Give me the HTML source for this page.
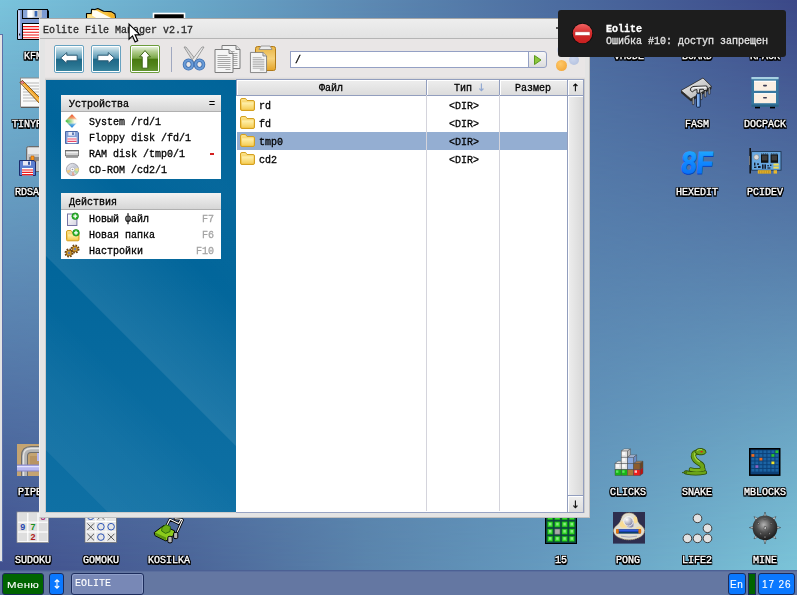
<!DOCTYPE html>
<html><head><meta charset="utf-8"><title>Eolite</title>
<style>
*{box-sizing:border-box;margin:0;padding:0}
html,body{width:797px;height:595px;overflow:hidden}
body{position:relative;font-family:"Liberation Mono","DejaVu Sans Mono",monospace;font-size:10px;line-height:10px;color:#000;background:#5a80b0}
div,span,svg{position:absolute}
svg{overflow:visible}
#wp1,#wp2{left:0;top:0;width:797px;height:595px}
#wp1{background:linear-gradient(to right,#7ac4dc 0%,#69a8c9 24%,#5c88b2 47%,#4c6ca0 70%,#3c4888 100%)}
#wp2{background:linear-gradient(to right,#3e4a8a 0%,#4a6296 24%,#5a84ac 46%,#669cc0 68%,#7ecadc 100%);-webkit-mask-image:linear-gradient(to bottom,transparent 0%,#000 100%);mask-image:linear-gradient(to bottom,transparent 0%,#000 100%)}
#lstrip{left:-10px;top:34px;width:13px;height:528px;background:#e4e4e4;border:1px solid #5c70a8}
.dl{will-change:transform;width:80px;margin-left:-40px;text-align:center;color:#fff;font-size:10px;line-height:10px;white-space:nowrap;-webkit-text-stroke:0.35px #fff;text-shadow:1px 0 #000,-1px 0 #000,0 1px #000,0 -1px #000,1px 1px #000,-1px -1px #000,1px -1px #000,-1px 1px #000,0 2px #000,1px 2px #000,-1px 2px #000}
.di{width:32px;height:32px}
.t{white-space:nowrap;color:#000;letter-spacing:0;will-change:transform;-webkit-text-stroke-width:0.3px}
.ar{font-family:"DejaVu Sans","Liberation Sans",sans-serif;font-size:10px;line-height:10px}
/* window */
#win{left:39px;top:18px;width:551px;height:500px;background:#e4e4e4;border:1px solid #c0c0c0;border-top-color:#a8a8a8;border-left-color:#f0f0f0}
#title{left:40px;top:19px;width:549px;height:20px;background:linear-gradient(#eeeeee,#e2e2e2);border-bottom:1px solid #b4b4b4}
#tbar{left:45px;top:39px;width:540px;height:41px;background:#e9e6e6}
.btn{width:30px;height:28px;border:1px solid #68a2c0;background:#fff;padding:0;border-radius:2px}
.btn i{position:absolute;left:1px;top:1px;right:1px;bottom:1px;display:block;background:linear-gradient(#dcebf1 0%,#9cc4d4 20%,#5a98b4 46%,#1e6888 52%,#27728f 75%,#38849f 100%)}
.btn.g{border-color:#6c9c3c}
.btn.g i{background:linear-gradient(#e6f1d8 0%,#b0cc8c 20%,#7ca848 46%,#497a10 52%,#51841a 75%,#649632 100%)}
#panel{left:46px;top:80px;width:190px;height:432px;background:linear-gradient(#00649a 0%,#02669b 45%,#0f70a4 100%)}
.box{left:61px;width:160px;background:#fff}
.box .h{left:0;top:0;width:160px;height:17px;background:linear-gradient(#f2f2f2,#d6d6d6);border-bottom:1px solid #b0b0b0}
#list{left:236px;top:80px;width:348px;height:433px;background:#fff;border-bottom:1px solid #98a4c4}
.hd{top:79px;height:17px;background:linear-gradient(#eeeeee,#dcdcdc);border:1px solid #929ebe;box-shadow:inset 1px 1px 0 #fff;text-align:center}
.vl{top:95px;width:1px;height:416px;background:#d4d4dc}
.ic16{width:16px;height:16px}
/* taskbar */
#task{left:0;top:570px;width:797px;height:25px;background:#6477a2;border-top:1px solid #4c6094;box-shadow:inset 0 1px 0 #5a6e9e}
.tb{top:573px;height:22px;border:1px solid #1c2c5c;border-radius:3px;color:#fff;font-family:"Liberation Sans","DejaVu Sans",sans-serif}
</style></head><body>
<div id="wp1"></div><div id="wp2"></div>
<div id="lstrip"></div>
<div id="desk" style="left:0;top:0;width:797px;height:595px">
<!-- KFM floppy -->
<svg style="left:17px;top:9px" width="32" height="31" viewBox="0 0 32 31">
<path d="M1.5 0.5 H30 L31.5 2 V30.5 H0.5 V1.5 Z" fill="#7c9ad2" stroke="#000" stroke-width="1"/>
<rect x="1" y="1.5" width="2.2" height="28.5" fill="#c6d2f6"/>
<rect x="5.5" y="0.5" width="25" height="9" fill="#7c9ad2" stroke="#000"/>
<rect x="5.9" y="1" width="4.3" height="8" fill="#88a4d8"/>
<rect x="10.5" y="1" width="14" height="7.5" fill="#e4e4e4"/><rect x="10.5" y="1" width="5" height="7.5" fill="#fff"/><rect x="21" y="1" width="3.5" height="7.5" fill="#c4c4c4"/>
<rect x="17.6" y="2" width="2.8" height="5.6" fill="#3464b4"/>
<rect x="5.5" y="14.5" width="25" height="16" fill="#fff" stroke="#000"/>
<path d="M6 17.6h24M6 20.4h24M6 23.2h24M6 26h24M6 28.8h24" stroke="#f01414" stroke-width="1.1"/>
<rect x="2" y="24.5" width="1.2" height="2" fill="#222"/>
</svg>
<span class="dl" style="left:33px;top:52px">KFM</span>
<!-- EOLITE (partly hidden) -->
<svg style="left:85px;top:8px" width="32" height="32" viewBox="0 0 32 32">
<path d="M1.5 12 L1.5 5.5 L6.2 5.5 L6.6 1.2 L10 1.6 L12.8 0.5 L18.6 3.2 L26.2 3.6 L30 6 L30.6 12 L30.6 28 L1.5 28 Z" fill="#f6c444" stroke="#000" stroke-width="1.1" stroke-linejoin="round"/>
<path d="M7.2 2.2 L11.4 2.6 L27 10.4 L7 10.4 Z" fill="#fffef4"/>
<path d="M2.4 6.6 L5.4 6.4 L12 10.4 L2.4 10.4 Z" fill="#fbe08a"/>
<path d="M22 5.2 L27 5.4 L29.6 8 L29.8 10.4 L27 10.4 Z" fill="#f4b428"/>
</svg>
<span class="dl" style="left:101px;top:52px">EOLITE</span>
<!-- SHELL (partly hidden) -->
<svg style="left:153px;top:13px" width="32" height="26" viewBox="0 0 32 26">
<rect x="0.5" y="0.5" width="31" height="24" fill="#000" stroke="#fff" stroke-width="1.6"/>
</svg>
<span class="dl" style="left:169px;top:52px">SHELL</span>
<!-- TINYPAD -->
<svg style="left:17px;top:77px" width="32" height="32" viewBox="0 0 32 32">
<rect x="3.5" y="1" width="24" height="29" fill="#fafafa" stroke="#8c8c8c" stroke-width="1"/>
<path d="M4 30.5h24" stroke="#5a5a5a"/>
<path d="M6 6h19M6 9h19M6 12h19M6 15h19M6 18h19M6 21h19M6 24h19" stroke="#b8b8b8" stroke-width="1"/>
<path d="M3 5.5 L5.5 3.5 L26 24 L27 28 L23 27 Z" fill="#f4a428" stroke="#6a4410" stroke-width="0.8"/>
<path d="M3 5.5 L5.5 3.5 L7.5 5.5 L5 7.6 Z" fill="#e87a8a" stroke="#6a4410" stroke-width="0.6"/>
<path d="M5 6.5 L24.5 26" stroke="#fcd88a" stroke-width="1"/>
</svg>
<span class="dl" style="left:33px;top:120px">TINYPAD</span>
<!-- RDSAVE -->
<svg style="left:17px;top:145px" width="32" height="32" viewBox="0 0 32 32">
<rect x="9.5" y="1.5" width="22" height="25" rx="2" fill="#c4c4c4" stroke="#6c6c6c"/>
<rect x="11" y="3" width="20" height="6" fill="#e8e8e8"/>
<rect x="12" y="12" width="19" height="4" fill="#8a8a8a"/>
<path d="M14 11 h3 v5 h2.2 l-3.7 4 l-3.7 -4 h2.2 Z" fill="#ff9a1c" stroke="#b45a08" stroke-width="0.6"/>
<path d="M2.5 15.5 H17 L18.5 17 V30.5 H2.5 Z" fill="#5c7ed0" stroke="#1c2c6c" stroke-width="1"/>
<rect x="6" y="16" width="8" height="4.5" fill="#e8e8f4"/><rect x="11" y="16.6" width="2" height="3.2" fill="#3454a4"/>
<rect x="5" y="23" width="11" height="7.5" fill="#fff"/>
<path d="M5 25h11M5 27.4h11M5 29.6h11" stroke="#f01c1c" stroke-width="1.2"/>
</svg>
<span class="dl" style="left:33px;top:188px">RDSAVE</span>
<!-- PIPES -->
<svg style="left:17px;top:444px" width="32" height="32" viewBox="0 0 32 32">
<rect x="0" y="0" width="32" height="32" fill="#c4a472"/>
<path d="M7.5 32 V12 Q7.5 5.5 14 5.5 H32" fill="none" stroke="#6e6e6e" stroke-width="7"/>
<path d="M7.5 32 V12 Q7.5 5.5 14 5.5 H32" fill="none" stroke="#b4b4b4" stroke-width="5"/>
<path d="M6.5 32 V12 Q6.5 4.5 14 4.5 H32" fill="none" stroke="#e4e4e4" stroke-width="1.4"/>
<rect x="13" y="12" width="19" height="9" fill="#b89462"/>
<path d="M0 24 H32" stroke="#8484c8" stroke-width="7"/>
<path d="M0 24 H32" stroke="#b8b8f0" stroke-width="5"/>
<path d="M0 22.6 H32" stroke="#e4e4ff" stroke-width="1.2"/>
<path d="M22 9 V17" stroke="#b8b8f0" stroke-width="4"/>
</svg>
<span class="dl" style="left:33px;top:488px">PIPES</span>
<!-- SUDOKU -->
<svg style="left:17px;top:512px" width="32" height="31" viewBox="0 0 32 31">
<rect x="0" y="0" width="31.5" height="30.5" fill="#fff" stroke="#909090" stroke-width="0.8"/>
<g fill="#dedede"><rect x="1.2" y="1" width="9" height="8.6"/><rect x="11.4" y="1" width="9" height="8.6"/><rect x="21.6" y="1" width="9" height="8.6"/><rect x="1.2" y="10.8" width="9" height="8.6"/><rect x="11.4" y="10.8" width="9" height="8.6"/><rect x="21.6" y="10.8" width="9" height="8.6"/><rect x="1.2" y="20.6" width="9" height="8.6"/><rect x="11.4" y="20.6" width="9" height="8.6"/><rect x="21.6" y="20.6" width="9" height="8.6"/></g>
<g font-family="Liberation Sans,DejaVu Sans,sans-serif" font-size="9" font-weight="bold" text-anchor="middle"><text x="5.7" y="18.4" fill="#2848b0">9</text><text x="15.9" y="18.4" fill="#18901c">7</text><text x="15.9" y="28.2" fill="#b01818">2</text><text x="26" y="8" fill="#b03880">8</text></g>
</svg>
<span class="dl" style="left:33px;top:556px">SUDOKU</span>
<!-- GOMOKU -->
<svg style="left:85px;top:512px" width="32" height="31" viewBox="0 0 32 31">
<rect x="0" y="0" width="31.5" height="30.5" fill="#fff" stroke="#707070" stroke-width="0.8"/>
<g fill="#e6e6e6"><rect x="1" y="0" width="9.4" height="9"/><rect x="11.2" y="0" width="9.4" height="9"/><rect x="21.4" y="0" width="9.4" height="9"/><rect x="1" y="10" width="9.4" height="9.4"/><rect x="11.2" y="10" width="9.4" height="9.4"/><rect x="21.4" y="10" width="9.4" height="9.4"/><rect x="1" y="20.4" width="9.4" height="9.4"/><rect x="11.2" y="20.4" width="9.4" height="9.4"/><rect x="21.4" y="20.4" width="9.4" height="9.4"/></g>
<g stroke="#4a4a4a" stroke-width="0.9" fill="none"><path d="M2.4 11.4l6.6 6.6M9 11.4l-6.6 6.6M2.4 21.8l6.6 6.6M9 21.8l-6.6 6.6M22.8 21.8l6.6 6.6M29.4 21.8l-6.6 6.6M12.6 1l6.6 6.6M19.2 1l-6.6 6.6"/></g>
<g stroke="#2c54b8" stroke-width="1" fill="none"><circle cx="15.9" cy="14.7" r="3.3"/><circle cx="26.1" cy="14.7" r="3.3"/><circle cx="15.9" cy="25.1" r="3.3"/><circle cx="5.7" cy="4.3" r="3.3"/></g>
</svg>
<span class="dl" style="left:101px;top:556px">GOMOKU</span>
<!-- KOSILKA -->
<svg style="left:153px;top:512px" width="32" height="32" viewBox="0 0 32 32">
<g fill="none" stroke="#000" stroke-width="2.6" stroke-linejoin="round" stroke-linecap="round"><path d="M14.2 12.7 L16.9 7.3 L25.7 11.5 L28.1 7.3 L29.6 7.9 L24.5 19.4"/><path d="M25.7 11.5 L28.1 7.3 L22 6.8"/></g>
<g fill="none" stroke="#fff" stroke-width="1.1" stroke-linejoin="round" stroke-linecap="round"><path d="M14.2 12.7 L16.9 7.3 L25.7 11.5 L28.1 7.3 L29.6 7.9 L24.5 19.4"/><path d="M28.1 7.3 L22 6.8"/></g>
<path d="M1.2 20.6 L10.6 13.6 L21.5 18.8 L21 23 L13 29 L2 23.6 Z" fill="#8ccc1c" stroke="#000" stroke-width="1"/>
<path d="M2 23 L13 28.4 L13 25.4 L2 20.6 Z" fill="#5c9410"/>
<path d="M9 15.5 L13 12.6 L17.5 14.6 L17 19.6 L12.6 21.4 L8.6 19 Z" fill="#6cae14" stroke="#1c5a08" stroke-width="0.8"/>
<rect x="14.8" y="24.4" width="4.4" height="6.4" rx="1.4" fill="#b4b4b4" stroke="#000" stroke-width="1"/>
<rect x="20.6" y="20.4" width="4.2" height="6.2" rx="1.4" fill="#b4b4b4" stroke="#000" stroke-width="1"/>
</svg>
<span class="dl" style="left:169px;top:556px">KOSILKA</span>
<!-- 15 -->
<svg style="left:545px;top:512px" width="32" height="32" viewBox="0 0 32 32">
<rect x="0.5" y="0.5" width="31" height="31" fill="#0c4444" stroke="#000"/>
<g fill="#34dc2c" stroke="#148c14" stroke-width="0.6"><rect x="2.6" y="2.6" width="5.2" height="5.2"/><rect x="9.8" y="2.6" width="5.2" height="5.2"/><rect x="17" y="2.6" width="5.2" height="5.2"/><rect x="24.2" y="2.6" width="5.2" height="5.2"/><rect x="2.6" y="9.8" width="5.2" height="5.2"/><rect x="9.8" y="9.8" width="5.2" height="5.2"/><rect x="17" y="9.8" width="5.2" height="5.2"/><rect x="24.2" y="9.8" width="5.2" height="5.2"/><rect x="2.6" y="17" width="5.2" height="5.2"/><rect x="17" y="17" width="5.2" height="5.2"/><rect x="24.2" y="17" width="5.2" height="5.2"/><rect x="2.6" y="24.2" width="5.2" height="5.2"/><rect x="9.8" y="24.2" width="5.2" height="5.2"/><rect x="17" y="24.2" width="5.2" height="5.2"/><rect x="24.2" y="24.2" width="5.2" height="5.2"/></g>
<g fill="#8ce884"><rect x="4" y="10.8" width="2.4" height="2.6"/><rect x="11.2" y="10.8" width="2.4" height="2.6"/><rect x="18.4" y="10.8" width="2.4" height="2.6"/><rect x="25.6" y="10.8" width="2.4" height="2.6"/><rect x="4" y="18" width="2.4" height="2.6"/><rect x="18.4" y="18" width="2.4" height="2.6"/><rect x="25.6" y="18" width="2.4" height="2.6"/><rect x="4" y="25.2" width="2.4" height="2.6"/><rect x="11.2" y="25.2" width="2.4" height="2.6"/><rect x="18.4" y="25.2" width="2.4" height="2.6"/><rect x="25.6" y="25.2" width="2.4" height="2.6"/></g>
<rect x="9.8" y="17" width="5.2" height="5.2" fill="#a8a8a8" stroke="#606060" stroke-width="0.6"/>
</svg>
<span class="dl" style="left:561px;top:556px">15</span>
<!-- PONG -->
<svg style="left:613px;top:512px" width="32" height="32" viewBox="0 0 32 32">
<defs><radialGradient id="pb" cx="0.32" cy="0.3" r="0.8"><stop offset="0" stop-color="#ffffff"/><stop offset="0.35" stop-color="#d0d0d8"/><stop offset="1" stop-color="#7c7c9c"/></radialGradient></defs>
<rect width="32" height="31.6" fill="#2e2e4e"/>
<path d="M16 1 Q22 1 23.5 6 Q24.5 10 27 12.5 Q31.8 16 31.5 19 Q31 23 26 25.6 Q21 27.8 16 27.8 Q11 27.8 6 25.6 Q1 23 0.5 19 Q0.2 16 5 12.5 Q7.5 10 8.5 6 Q10 1 16 1 Z" fill="#e0ddd2" stroke="#c8b478" stroke-width="0.8" stroke-dasharray="1.2 0.8"/>
<ellipse cx="11" cy="12.4" rx="4.4" ry="3.4" fill="#f8dc94"/><ellipse cx="22.4" cy="8" rx="2" ry="3.6" fill="#f8dc94"/><ellipse cx="26" cy="16" rx="3" ry="1.6" fill="#f4dc9c"/>
<path d="M12.6 13 Q16 17.4 20.4 14.4 L20.6 9 Z" fill="#8c8cac"/>
<circle cx="15.5" cy="9.4" r="4.7" fill="url(#pb)" stroke="#fdfdfd" stroke-width="0.9"/>
<rect x="3" y="17.2" width="25" height="4.3" rx="1.2" fill="#102c94"/>
<rect x="5.6" y="17.8" width="20" height="1.6" fill="#2c5ce0"/>
<rect x="5.6" y="20.4" width="20" height="0.9" fill="#0c4c44"/>
<rect x="3" y="17" width="2.8" height="4.7" rx="1.1" fill="#e0740c"/><rect x="25.4" y="17" width="2.8" height="4.7" rx="1.1" fill="#e0740c"/>
<path d="M8 24.2 Q16 26 24 24.2" stroke="#a8a8bc" stroke-width="1" fill="none"/>
</svg>
<span class="dl" style="left:628px;top:556px">PONG</span>
<!-- LIFE2 -->
<svg style="left:681px;top:512px" width="32" height="32" viewBox="0 0 32 32">
<g fill="#e2e2e2" stroke="#303030" stroke-width="0.9"><circle cx="16.5" cy="6.4" r="4.3"/><circle cx="26.5" cy="16.3" r="4.3"/><circle cx="6.4" cy="26.4" r="4.3"/><circle cx="16.5" cy="26.4" r="4.3"/><circle cx="26.5" cy="26.4" r="4.3"/></g>
</svg>
<span class="dl" style="left:697px;top:556px">LIFE2</span>
<!-- MINE -->
<svg style="left:749px;top:512px" width="32" height="32" viewBox="0 0 32 32">
<defs><radialGradient id="mg" cx="0.45" cy="0.38" r="0.65"><stop offset="0" stop-color="#b4b4b4"/><stop offset="0.45" stop-color="#505050"/><stop offset="1" stop-color="#161616"/></radialGradient></defs>
<g fill="#f2f2f2" stroke="#202020" stroke-width="0.5"><path d="M16 0 L17.4 5 L14.6 5 Z"/><path d="M16 32 L17.4 27 L14.6 27 Z"/><path d="M0.4 15.6 L5 14.2 L5 17 Z"/><path d="M31.6 15.6 L27 14.2 L27 17 Z"/><path d="M5 4.6 L9.4 6.6 L7.2 8.8 Z"/><path d="M27 4.6 L22.6 6.6 L24.8 8.8 Z"/><path d="M5 26.8 L9.4 24.8 L7.2 22.6 Z"/><path d="M27 26.8 L22.6 24.8 L24.8 22.6 Z"/></g>
<circle cx="16" cy="15.8" r="12.4" fill="url(#mg)"/>
<g fill="#f4f4f4" stroke="#1c1c1c" stroke-width="0.5"><path d="M15.6 14.4 l1.6 0.4 l-0.4 3 l-1.8 -0.6 Z"/><path d="M9 10 l1.6 1.8 l-1.4 1 Z"/><path d="M22.6 10 l-1.4 1.8 l1.4 0.8 Z"/><path d="M10.6 22 l1.4 -1.4 l0.4 1.8 Z"/><path d="M21.6 22 l-1.4 -1.6 l-0.4 1.8 Z"/><path d="M16 23.4 l0.9 2.4 l-1.8 0 Z"/><path d="M16 5.6 l0.9 2 l-1.8 0 Z"/></g>
</svg>
<span class="dl" style="left:765px;top:556px">MINE</span>
<!-- CLICKS -->
<svg style="left:612px;top:444px" width="32" height="32" viewBox="0 0 32 32">
<g stroke="#4c4c4c" stroke-width="0.5">
<!-- top faces -->
<path d="M9.2 7 L12 5 L18.4 5 L15.4 7 Z" fill="#f4f4f4"/>
<path d="M15.4 13.2 L18.4 11 L24.6 11 L21.6 13.2 Z" fill="#b4c8ec"/>
<path d="M3 19.4 L6 17.2 L9.2 17.2 L9.2 19.4 Z" fill="#f0f0f0"/>
<path d="M21.6 19.4 L24.6 17.2 L31 17.2 L28 19.4 Z" fill="#a87848"/>
<!-- right faces -->
<path d="M15.4 7 L18.4 5 L18.4 11 L15.4 13.2 Z" fill="#b8b8b8"/>
<path d="M21.6 13.2 L24.6 11 L24.6 17.2 L21.6 19.4 Z" fill="#6c8cc4"/>
<path d="M28 19.4 L31 17.2 L31 23.4 L28 25.6 Z" fill="#6c4420"/>
<path d="M28 25.6 L31 23.4 L31 29.4 L28 31.6 Z" fill="#c01010"/>
<!-- fronts -->
<rect x="9.2" y="7" width="6.2" height="6.2" fill="#e4e4e4"/>
<rect x="9.2" y="13.2" width="6.2" height="6.2" fill="#e4e4e4"/>
<rect x="15.4" y="13.2" width="6.2" height="6.2" fill="#88a8dc"/>
<rect x="3" y="19.4" width="6.2" height="6.2" fill="#e4e4e4"/>
<rect x="9.2" y="19.4" width="6.2" height="6.2" fill="#e4e4e4"/>
<rect x="15.4" y="19.4" width="6.2" height="6.2" fill="#88a8dc"/>
<rect x="21.6" y="19.4" width="6.4" height="6.2" fill="#8c5c2c"/>
<rect x="3" y="25.6" width="6.2" height="6" fill="#18b418"/>
<rect x="9.2" y="25.6" width="6.2" height="6" fill="#18b418"/>
<rect x="15.4" y="25.6" width="6.2" height="6" fill="#a87838"/>
<rect x="21.6" y="25.6" width="6.4" height="6" fill="#f01c1c"/>
</g>
<g fill="#fff" opacity="0.75"><rect x="10.2" y="8" width="3" height="3"/><rect x="10.2" y="14.2" width="3" height="3"/><rect x="4" y="20.4" width="3" height="3"/><rect x="10.2" y="20.4" width="3" height="3"/><rect x="22.6" y="26.4" width="2.4" height="2.4"/></g>
<g fill="#6cf06c" opacity="0.8"><rect x="4" y="26.4" width="2.4" height="2.4"/><rect x="10.2" y="26.4" width="2.4" height="2.4"/></g>
</svg>
<span class="dl" style="left:628px;top:488px">CLICKS</span>
<!-- SNAKE -->
<svg style="left:680px;top:444px" width="32" height="32" viewBox="0 0 32 32">
<g fill="none" stroke-linecap="round">
<path d="M6 28.4 Q16 30.4 25 28.4" stroke="#2c4c08" stroke-width="4.2"/>
<path d="M11 25.6 Q17 27.2 23.4 25.4" stroke="#2c4c08" stroke-width="4.6"/>
<path d="M19 8 Q13 8 13.4 12.4 Q14 16.4 19 19 Q24 21.6 22 25" stroke="#2c4c08" stroke-width="5.4"/>
<path d="M6 28.4 Q16 30.4 25 28.4" stroke="#6ca418" stroke-width="2.6"/>
<path d="M11 25.6 Q17 27.2 23.4 25.4" stroke="#78b41c" stroke-width="3"/>
<path d="M19 8 Q13 8 13.4 12.4 Q14 16.4 19 19 Q24 21.6 22 25" stroke="#6ca418" stroke-width="3.8"/>
<path d="M18 7.4 Q14 8 14.6 12 Q15.6 15.6 19.6 17.8" stroke="#a8d844" stroke-width="1.1"/>
</g>
<path d="M15 7.4 Q17 3.8 22 4.6 Q26.6 5.6 26 8.4 Q25 11 19.6 10.8 Q15.4 10.4 15 7.4 Z" fill="#6ca418" stroke="#2c4c08" stroke-width="0.9"/>
<path d="M17 6.6 Q19 5 22 5.6" stroke="#a8d844" stroke-width="1" fill="none"/>
<rect x="20.6" y="7" width="2" height="1.4" fill="#e01818"/>
<path d="M2 28.6 L6.4 27.6 L6.4 29.4 Z" fill="#6ca418" stroke="#2c4c08" stroke-width="0.6"/>
</svg>
<span class="dl" style="left:697px;top:488px">SNAKE</span>
<!-- MBLOCKS -->
<svg style="left:749px;top:448px" width="32" height="28" viewBox="0 0 32 28">
<rect x="0.75" y="0.75" width="30" height="26.4" fill="#0c4078" stroke="#000" stroke-width="1.5"/>
<g fill="#1c64a4"><rect x="2.4" y="2.4" width="3" height="2.7"/><rect x="6.4" y="2.4" width="3" height="2.7"/><rect x="10.4" y="2.4" width="3" height="2.7"/><rect x="14.4" y="2.4" width="3" height="2.7"/><rect x="18.4" y="2.4" width="3" height="2.7"/><rect x="22.4" y="2.4" width="3" height="2.7"/>
<rect x="6.4" y="6.1" width="3" height="2.7"/><rect x="10.4" y="6.1" width="3" height="2.7"/><rect x="14.4" y="6.1" width="3" height="2.7"/><rect x="18.4" y="6.1" width="3" height="2.7"/><rect x="26.4" y="6.1" width="3" height="2.7"/>
<rect x="2.4" y="9.8" width="3" height="2.7"/><rect x="6.4" y="9.8" width="3" height="2.7"/><rect x="14.4" y="9.8" width="3" height="2.7"/><rect x="18.4" y="9.8" width="3" height="2.7"/><rect x="22.4" y="9.8" width="3" height="2.7"/><rect x="26.4" y="9.8" width="3" height="2.7"/>
<rect x="2.4" y="13.5" width="3" height="2.7"/><rect x="6.4" y="13.5" width="3" height="2.7"/><rect x="10.4" y="13.5" width="3" height="2.7"/><rect x="14.4" y="13.5" width="3" height="2.7"/><rect x="18.4" y="13.5" width="3" height="2.7"/><rect x="26.4" y="13.5" width="3" height="2.7"/>
<rect x="2.4" y="17.2" width="3" height="2.7"/><rect x="10.4" y="17.2" width="3" height="2.7"/><rect x="14.4" y="17.2" width="3" height="2.7"/><rect x="18.4" y="17.2" width="3" height="2.7"/><rect x="22.4" y="17.2" width="3" height="2.7"/><rect x="26.4" y="17.2" width="3" height="2.7"/>
<rect x="2.4" y="20.9" width="3" height="2.7"/><rect x="6.4" y="20.9" width="3" height="2.7"/><rect x="10.4" y="20.9" width="3" height="2.7"/><rect x="14.4" y="20.9" width="3" height="2.7"/><rect x="18.4" y="20.9" width="3" height="2.7"/><rect x="22.4" y="20.9" width="3" height="2.7"/><rect x="26.4" y="20.9" width="3" height="2.7"/></g>
<rect x="2.4" y="6.1" width="3" height="2.7" fill="#f06c1c"/><rect x="10.4" y="9.8" width="3" height="2.7" fill="#f06c1c"/>
<rect x="26.4" y="2.4" width="3" height="2.7" fill="#2cc42c"/><rect x="22.4" y="6.1" width="3" height="2.7" fill="#2cc42c"/>
<rect x="22.4" y="13.5" width="3" height="2.7" fill="#f0e42c"/><rect x="6.4" y="17.2" width="3" height="2.7" fill="#8c64c4"/>
</svg>
<span class="dl" style="left:765px;top:488px">MBLOCKS</span>
<!-- FASM -->
<svg style="left:680px;top:77px" width="32" height="32" viewBox="0 0 32 32">
<defs><linearGradient id="fc" x1="0" y1="0" x2="1" y2="1"><stop offset="0" stop-color="#f4f4f4"/><stop offset="1" stop-color="#a8a8a8"/></linearGradient></defs>
<path d="M1 13.6 L23 1 L31.6 9.4 L31.4 12 L11 24.6 L1 16 Z" fill="#2c2c2c"/>
<g fill="#c8c8c8" stroke="#1c1c1c" stroke-width="0.6"><path d="M12.4 21 v6.6 h1.6 v-7.6 Z"/><path d="M20.4 16 v6.6 h1.6 v-7.6 Z"/><path d="M24.4 13.6 v6.4 h1.6 v-7.4 Z"/><path d="M28.4 11.2 v6 h1.6 v-7 Z"/></g>
<path d="M1 13.5 L23 1 L31.6 9.4 L10.8 21.9 Z" fill="url(#fc)" stroke="#1c1c1c" stroke-width="0.7"/>
<path d="M10.4 13.4 Q10 10 14 9.4 L26 9 Q27.4 9 27.4 10.6 L27.4 13 L24 13.6 L23.4 12.2 L19.6 12.4 L19.6 16 L17 16 L17 12.6 Q13.4 12.6 12.6 15 Z" fill="#d4d4d4" stroke="#141414" stroke-width="0.9"/>
<path d="M12.4 11.6 Q14 10.4 18 10.4 L26 10.2" stroke="#fff" stroke-width="1" fill="none"/>
<rect x="16.6" y="16.6" width="3.6" height="13.6" rx="0.8" fill="#5c94e0" stroke="#101830" stroke-width="0.9"/>
<rect x="17.4" y="17.4" width="1" height="12" fill="#a4c8f8"/>
</svg>
<span class="dl" style="left:697px;top:120px">FASM</span>
<!-- DOCPACK -->
<svg style="left:751px;top:77px" width="28" height="32" viewBox="0 0 28 32">
<rect x="0.4" y="0" width="27.2" height="29.8" fill="#3878a0"/>
<rect x="0.4" y="0" width="27.2" height="2.2" fill="#a8d0e2"/>
<rect x="0.4" y="27.6" width="27.2" height="2.2" fill="#2c6488"/>
<rect x="3" y="3.8" width="22" height="10" fill="#fbefe2"/><rect x="3" y="3.8" width="22" height="1" fill="#fff"/>
<rect x="3" y="16.2" width="22" height="10" fill="#fbefe2"/><rect x="3" y="16.2" width="22" height="1" fill="#fff"/>
<rect x="12" y="7.8" width="4" height="1.6" rx="0.8" fill="#3c3c54"/><rect x="12" y="20" width="4" height="1.6" rx="0.8" fill="#3c3c54"/>
<rect x="4" y="29.8" width="5" height="1.6" fill="#000"/><rect x="19" y="29.8" width="5" height="1.6" fill="#000"/>
</svg>
<span class="dl" style="left:765px;top:120px">DOCPACK</span>
<!-- HEXEDIT -->
<svg style="left:680px;top:145px" width="36" height="32" viewBox="0 0 36 32">
<defs><linearGradient id="hx" x1="0" y1="0" x2="0" y2="1"><stop offset="0" stop-color="#28d4ff"/><stop offset="0.14" stop-color="#20a8ff"/><stop offset="0.5" stop-color="#1088ff"/><stop offset="1" stop-color="#0868f0"/></linearGradient></defs>
<g font-family="Liberation Sans,DejaVu Sans,sans-serif" font-weight="bold" font-size="30.5" transform="skewX(-5)">
<text x="3.2" y="29.3" textLength="31.5" lengthAdjust="spacingAndGlyphs" fill="#0444c4" stroke="#0444c4" stroke-width="1">8F</text>
<text x="3.2" y="28.5" textLength="31.5" lengthAdjust="spacingAndGlyphs" fill="url(#hx)" stroke="url(#hx)" stroke-width="0.9">8F</text>
</g>
</svg>
<span class="dl" style="left:697px;top:188px">HEXEDIT</span>
<!-- PCIDEV -->
<svg style="left:749px;top:145px" width="33" height="32" viewBox="0 0 33 32">
<path d="M0.4 3 H2 V28.4 H0.4 Z" fill="#111"/><rect x="0" y="11" width="1" height="9" fill="#777"/>
<rect x="2.6" y="6.6" width="29.4" height="18.6" fill="#68a8e2" stroke="#1c3450" stroke-width="0.9"/>
<circle cx="7.4" cy="12.2" r="2.6" fill="#dcdcdc" stroke="#7c7c7c" stroke-width="0.6"/>
<g fill="#111"><rect x="12" y="9.4" width="7.4" height="8.4"/><rect x="21.6" y="9.4" width="7.4" height="8.4"/></g>
<g stroke="#111" stroke-width="0.6"><path d="M12.8 8.2v1.2M14.6 8.2v1.2M16.4 8.2v1.2M18.2 8.2v1.2M22.4 8.2v1.2M24.2 8.2v1.2M26 8.2v1.2M27.8 8.2v1.2"/></g>
<g fill="#3c3c3c"><rect x="13" y="10.4" width="5.4" height="5" /><rect x="22.6" y="10.4" width="5.4" height="5"/></g>
<g fill="#141c2c"><rect x="5" y="17.6" width="1.4" height="3"/><rect x="8" y="18.4" width="2" height="1.4"/><rect x="5" y="21.6" width="2.4" height="1.4"/><rect x="9" y="21" width="2.6" height="2"/><rect x="13" y="19.4" width="1.6" height="4.4"/><rect x="15.4" y="19.4" width="1.6" height="4.4"/><rect x="18.4" y="20" width="1.4" height="1.4"/><rect x="18.4" y="22.4" width="3" height="1.2"/><rect x="21" y="19.6" width="1.4" height="1.4"/></g>
<g fill="#f4dc4c"><rect x="24.4" y="18.6" width="5.4" height="2"/><rect x="24.4" y="21.6" width="5.4" height="2"/></g>
<path d="M8.8 25.2 H22 V28.6 H8.8 Z" fill="#e8b82c"/><path d="M10.4 25.6v3M12.2 25.6v3M14 25.6v3M15.8 25.6v3M17.6 25.6v3M19.4 25.6v3M21 25.6v3" stroke="#a87818" stroke-width="0.6"/>
<rect x="24.6" y="25.2" width="3.4" height="3.4" fill="#e8b82c"/>
</svg>
<span class="dl" style="left:765px;top:188px">PCIDEV</span>
<!-- hidden under notification -->
<span class="dl" style="left:629px;top:52px">VMODE</span>
<span class="dl" style="left:697px;top:52px">BOARD</span>
<span class="dl" style="left:765px;top:52px">KPACK</span>
</div>
<div id="win"></div>
<div id="title"></div>
<span class="t" style="left:42.5px;top:26px;color:#2a2a2a">Eolite File Manager v2.17</span>
<div style="left:556px;top:27px;width:2px;height:2px;background:#555"></div>
<div id="tbar"></div>
<div style="left:45px;top:77px;width:540px;height:3px;background:linear-gradient(#e9e6e6,#cfcfcf)"></div>
<div style="left:45px;top:79px;width:540px;height:434px;border:1px solid #cbcbcb"></div>
<!-- toolbar buttons -->
<div class="btn" style="left:54px;top:45px"><i></i>
<svg style="left:5px;top:6px" width="18" height="12" viewBox="0 0 18 12"><path d="M0.6 6 L6.8 0.6 L6.8 3.2 L17.2 3.2 L17.2 8.8 L6.8 8.8 L6.8 11.4 Z" fill="#fff" stroke="#2a5a74" stroke-width="1"/></svg></div>
<div class="btn" style="left:91px;top:45px"><i></i>
<svg style="left:5px;top:6px" width="18" height="12" viewBox="0 0 18 12"><path d="M17.4 6 L11.2 0.6 L11.2 3.2 L0.8 3.2 L0.8 8.8 L11.2 8.8 L11.2 11.4 Z" fill="#fff" stroke="#2a5a74" stroke-width="1"/></svg></div>
<div class="btn g" style="left:130px;top:45px"><i></i>
<svg style="left:8px;top:4px" width="12" height="19" viewBox="0 0 12 19"><path d="M6 0.6 L0.6 6.8 L3.2 6.8 L3.2 18.2 L8.8 18.2 L8.8 6.8 L11.4 6.8 Z" fill="#fff" stroke="#3c6414" stroke-width="1"/></svg></div>
<div style="left:171px;top:47px;width:1px;height:25px;background:#a0a8c0"></div>
<!-- scissors -->
<svg style="left:182px;top:46px" width="24" height="24" viewBox="0 0 24 24">
<path d="M2 1 L4 1 L14 14 L11.5 16 Z" fill="#d8d8d8" stroke="#8a8a8a" stroke-width="0.8"/>
<path d="M22 1 L20 1 L10 14 L12.5 16 Z" fill="#ececec" stroke="#8a8a8a" stroke-width="0.8"/>
<ellipse cx="6.5" cy="18.5" rx="4" ry="4.2" fill="none" stroke="#3e6eae" stroke-width="3.6"/>
<ellipse cx="6.5" cy="18.5" rx="4" ry="4.2" fill="none" stroke="#6a9cd8" stroke-width="2"/>
<ellipse cx="17.5" cy="18.5" rx="4" ry="4.2" fill="none" stroke="#3e6eae" stroke-width="3.6"/>
<ellipse cx="17.5" cy="18.5" rx="4" ry="4.2" fill="none" stroke="#6a9cd8" stroke-width="2"/>
</svg>
<!-- copy -->
<svg style="left:214px;top:44px" width="28" height="29" viewBox="0 0 28 29">
<defs><g id="pg"><path d="M0.5 0.5 L14.5 0.5 L18.5 4.5 L18.5 23.5 L0.5 23.5 Z" fill="#f4f4f4" stroke="#7c7c7c"/><path d="M14.5 0.5 L14.5 4.5 L18.5 4.5" fill="#dcdcdc" stroke="#7c7c7c"/>
<path d="M3 6.5h10M3 8.5h13M3 10.5h13M3 12.5h13M3 14.5h13M3 16.5h13M3 18.5h13M11 20.5h5" stroke="#a8a8a8" stroke-width="1"/></g></defs>
</svg>
<svg style="left:221px;top:45px" width="20" height="24" viewBox="0 0 19 24"><use href="#pg"/></svg>
<svg style="left:214px;top:49px" width="20" height="24" viewBox="0 0 19 24"><use href="#pg"/></svg>
<!-- paste -->
<svg style="left:250px;top:45px" width="27" height="28" viewBox="0 0 27 28">
<defs><linearGradient id="cb" x1="0" y1="0" x2="0" y2="1"><stop offset="0" stop-color="#e8b444"/><stop offset="0.5" stop-color="#f6d27c"/><stop offset="1" stop-color="#e4a428"/></linearGradient></defs>
<rect x="5.5" y="1.5" width="20" height="24" rx="2" fill="url(#cb)" stroke="#b07a18"/>
<path d="M9 4.5 L11 1 L20 1 L22 4.5 Z" fill="#ececec" stroke="#8a8a8a" stroke-width="0.8"/>
</svg>
<svg style="left:250px;top:52px" width="17" height="21" viewBox="0 0 19 24" preserveAspectRatio="none"><use href="#pg"/></svg>
<!-- path -->
<div style="left:290px;top:51px;width:239px;height:17px;background:#fff;border:1px solid #94a0c4"></div>
<span class="t" style="left:295px;top:56px">/</span>
<div style="left:528px;top:51px;width:19px;height:17px;background:linear-gradient(#f8f8f8,#dcdcdc);border:1px solid #94a0c4;border-radius:0 3px 3px 0"></div>
<svg style="left:534px;top:55px" width="8" height="10" viewBox="0 0 8 10"><path d="M0.5 0.5 L7 5 L0.5 9.5 Z" fill="#8cc63c" stroke="#5a9a1c" stroke-width="1"/></svg>
<!-- logo dots -->
<div style="left:556px;top:59.5px;width:11px;height:11px;border-radius:50%;background:radial-gradient(circle at 40% 35%,#ffc868,#f0a030)"></div>
<div style="left:569px;top:55px;width:10px;height:10px;border-radius:50%;background:radial-gradient(circle at 40% 35%,#ccd6ee,#b0bedc)"></div>
<div style="left:557px;top:46px;width:8px;height:8px;border-radius:50%;background:#c8d0e8"></div>
<!-- left panel -->
<div id="panel"><div style="left:0;top:0;width:190px;height:432px;background:linear-gradient(45deg,rgba(255,255,255,0) 0%,rgba(255,255,255,0) 9.9%,rgba(255,255,255,0.06) 10%,rgba(255,255,255,0.04) 22%,rgba(255,255,255,0.0) 34%,rgba(255,255,255,0) 41.1%,rgba(255,255,255,0.09) 41.2%,rgba(255,255,255,0.06) 50%,rgba(255,255,255,0) 64%,rgba(255,255,255,0.02) 80%,rgba(255,255,255,0) 100%)"></div></div>
<div class="box" style="top:95px;height:84px"><div class="h"></div></div>
<span class="t" style="left:69px;top:100px">Устройства</span>
<span class="t" style="left:209px;top:100px">=</span>
<span class="t" style="left:89px;top:118px">System /rd/1</span>
<span class="t" style="left:89px;top:134px">Floppy disk /fd/1</span>
<span class="t" style="left:89px;top:150px">RAM disk /tmp0/1</span>
<span class="t" style="left:89px;top:166px">CD-ROM /cd2/1</span>
<div style="left:210px;top:153px;width:4px;height:2px;background:#d42020"></div>
<div class="box" style="top:193px;height:66px"><div class="h"></div></div>
<span class="t" style="left:69px;top:198px">Действия</span>
<span class="t" style="left:89px;top:215px">Новый файл</span>
<span class="t" style="left:89px;top:231px">Новая папка</span>
<span class="t" style="left:89px;top:247px">Настройки</span>
<span class="t" style="left:202px;top:215px;color:#a4a4a4">F7</span>
<span class="t" style="left:202px;top:231px;color:#a4a4a4">F6</span>
<span class="t" style="left:196px;top:247px;color:#a4a4a4">F10</span>
<!-- file list -->
<div id="list"></div>
<div style="left:237px;top:132px;width:330px;height:18px;background:#94aed2"></div>
<div class="hd" style="left:236px;width:191px"></div>
<div class="hd" style="left:426px;width:74px"></div>
<div class="hd" style="left:499px;width:69px"></div>
<div class="hd" style="left:567px;width:17px"></div>
<div class="vl" style="left:426px"></div><div class="vl" style="left:499px"></div>
<span class="t" style="left:319px;top:84px">Файл</span>
<span class="t" style="left:454px;top:84px">Тип</span>
<span class="t ar" style="left:477px;top:83px;color:#8ca4d0">↓</span>
<span class="t" style="left:515px;top:84px">Размер</span>
<span class="t ar" style="left:571px;top:83px">↑</span>
<span class="t" style="left:259px;top:102px">rd</span>
<span class="t" style="left:259px;top:120px">fd</span>
<span class="t" style="left:259px;top:138px">tmp0</span>
<span class="t" style="left:259px;top:156px">cd2</span>
<span class="t" style="left:449px;top:102px">&lt;DIR&gt;</span>
<span class="t" style="left:449px;top:120px">&lt;DIR&gt;</span>
<span class="t" style="left:449px;top:138px">&lt;DIR&gt;</span>
<span class="t" style="left:449px;top:156px">&lt;DIR&gt;</span>
<!-- scrollbar -->
<div style="left:567px;top:95px;width:17px;height:401px;background:linear-gradient(to right,#eeeeee,#d8d8d8);border:1px solid #929ebe;box-shadow:inset 1px 1px 0 #fff"></div>
<div style="left:567px;top:495px;width:17px;height:18px;background:linear-gradient(#eeeeee,#dcdcdc);border:1px solid #929ebe;box-shadow:inset 1px 1px 0 #fff"></div>
<span class="t ar" style="left:571px;top:500px">↓</span>
<!-- folder icons -->
<svg width="0" height="0" style="left:0;top:0"><defs>
<linearGradient id="fg1" x1="0" y1="0" x2="0" y2="1"><stop offset="0" stop-color="#fce48c"/><stop offset="1" stop-color="#f0bc38"/></linearGradient>
<linearGradient id="fg2" x1="0" y1="0" x2="0" y2="1"><stop offset="0" stop-color="#fff2b0"/><stop offset="1" stop-color="#f5ce58"/></linearGradient>
<g id="fold"><path d="M0.5 2 Q0.5 0.5 2 0.5 L5.6 0.5 L7 2.5 L13 2.5 Q14.5 2.5 14.5 4 L14.5 11 Q14.5 12.5 13 12.5 L2 12.5 Q0.5 12.5 0.5 11 Z" fill="url(#fg1)" stroke="#d4a020" stroke-width="1"/>
<rect x="2" y="4.4" width="11.4" height="7.2" fill="url(#fg2)"/></g>
<g id="plus"><circle cx="0" cy="0" r="3.3" fill="#2cb42c" stroke="#148414" stroke-width="0.7"/><path d="M-2 0H2M0 -2V2" stroke="#fff" stroke-width="1.3"/></g>
</defs></svg>
<svg style="left:240px;top:98px" width="15" height="13" viewBox="0 0 15 13"><use href="#fold"/></svg>
<svg style="left:240px;top:116px" width="15" height="13" viewBox="0 0 15 13"><use href="#fold"/></svg>
<svg style="left:240px;top:134px" width="15" height="13" viewBox="0 0 15 13"><use href="#fold"/></svg>
<svg style="left:240px;top:152px" width="15" height="13" viewBox="0 0 15 13"><use href="#fold"/></svg>
<!-- device icons -->
<svg style="left:65px;top:114px" width="14" height="14" viewBox="0 0 14 14">
<defs><linearGradient id="dg" x1="0" y1="0" x2="1" y2="0"><stop offset="0" stop-color="#30b830"/><stop offset="0.42" stop-color="#a8dc98"/><stop offset="0.68" stop-color="#fffbe8"/><stop offset="1" stop-color="#ffffff"/></linearGradient>
<linearGradient id="dg2" x1="0" y1="0" x2="0" y2="1"><stop offset="0" stop-color="#f44028"/><stop offset="0.3" stop-color="#f89058" stop-opacity="0.75"/><stop offset="0.48" stop-color="#fff" stop-opacity="0"/><stop offset="0.58" stop-color="#fff" stop-opacity="0"/><stop offset="0.75" stop-color="#48a0e8" stop-opacity="0.75"/><stop offset="1" stop-color="#1070e8"/></linearGradient></defs>
<path d="M7 0.3 L13.7 7 L7 13.7 L0.3 7 Z" fill="url(#dg)"/><path d="M7 0.3 L13.7 7 L7 13.7 L0.3 7 Z" fill="url(#dg2)"/>
</svg>
<svg style="left:65px;top:131px" width="14" height="13" viewBox="0 0 14 13">
<path d="M0.5 0.5 H12.3 L13.5 1.7 V12.5 H0.5 Z" fill="#86a2d8" stroke="#4a68a8" stroke-width="1"/>
<rect x="3.4" y="1" width="6.4" height="3.6" fill="#e8ecf8"/><rect x="7.2" y="1.4" width="1.6" height="2.6" fill="#4464a8"/>
<rect x="2.4" y="6.2" width="9.2" height="6" fill="#fff"/><path d="M2.4 8h9.2M2.4 10.4h9.2" stroke="#e84868" stroke-width="1.1"/>
</svg>
<svg style="left:65px;top:150px" width="14" height="8" viewBox="0 0 14 8">
<rect x="0.4" y="0.4" width="13.2" height="5.4" fill="#d0d0d0" stroke="#6c6c6c" stroke-width="0.8"/><rect x="0.4" y="0.2" width="13.2" height="1.3" fill="#686868"/><rect x="1" y="1.5" width="12" height="1.6" fill="#f0f0f0"/>
<path d="M2 6v2M4 6v2M6 6v2M8 6v2M10 6v2M12 6v2" stroke="#4a4a4a" stroke-width="1"/>
</svg>
<svg style="left:66px;top:163px" width="13" height="13" viewBox="0 0 13 13">
<defs><linearGradient id="cdg" x1="0" y1="0" x2="1" y2="1"><stop offset="0" stop-color="#f4f4f8"/><stop offset="0.5" stop-color="#c4c8d4"/><stop offset="1" stop-color="#ecece8"/></linearGradient></defs>
<circle cx="6.5" cy="6.5" r="6.1" fill="url(#cdg)" stroke="#8c8c98" stroke-width="0.7"/>
<path d="M6.5 6.5 L12.4 5 A6 6 0 0 1 12.2 8.6 Z" fill="#f8e070" opacity="0.8"/><path d="M6.5 6.5 L12.2 8.6 A6 6 0 0 1 10.6 11 Z" fill="#a0e090" opacity="0.7"/>
<path d="M6.5 6.5 L2 10.6 A6 6 0 0 1 0.6 7.6 Z" fill="#f8c868" opacity="0.8"/><path d="M6.5 6.5 L8.6 12.2 A6 6 0 0 1 6 12.5 Z" fill="#f09070" opacity="0.7"/>
<circle cx="6.5" cy="6.5" r="2.3" fill="#fbfbfb" stroke="#a4a4b0" stroke-width="0.5"/><circle cx="6.5" cy="6.5" r="0.8" fill="#9090a0"/>
</svg>
<!-- action icons -->
<svg style="left:67px;top:213px" width="12" height="13" viewBox="0 0 12 13">
<defs><linearGradient id="nf" x1="0" y1="0" x2="1" y2="1"><stop offset="0" stop-color="#fff"/><stop offset="1" stop-color="#d4d4e0"/></linearGradient></defs>
<rect x="0.5" y="1" width="9.4" height="11.5" fill="url(#nf)" stroke="#7474a4" stroke-width="1"/><use href="#plus" x="8.2" y="3.2"/>
</svg>
<svg style="left:66px;top:229px" width="14" height="13" viewBox="0 0 14 13">
<path d="M0.5 3 Q0.5 1.5 2 1.5 L5 1.5 L6.4 3.5 L12 3.5 Q13 3.5 13 4.6 L13 10.6 Q13 11.8 12 11.8 L1.6 11.8 Q0.5 11.8 0.5 10.6 Z" fill="url(#fg1)" stroke="#d4a020" stroke-width="1"/><rect x="2" y="5.4" width="9.8" height="5.4" fill="url(#fg2)"/><use href="#plus" x="10" y="3.8"/>
</svg>
<svg style="left:64px;top:244px" width="16" height="14" viewBox="0 0 16 14">
<defs><g id="gear"><circle cx="0" cy="0" r="3.4" fill="none" stroke="#6c4410" stroke-width="2.2" stroke-dasharray="1.5 1.17"/><circle cx="0" cy="0" r="2.9" fill="#e8a820" stroke="#6c4410" stroke-width="0.7"/><circle cx="0" cy="0" r="1.2" fill="#8c94b4" stroke="#5c5c7c" stroke-width="0.5"/></g></defs>
<use href="#gear" x="5" y="9"/><use href="#gear" x="11" y="5"/>
</svg>
<div id="notif" style="left:558px;top:10px;width:228px;height:47px;background:#1d1d1d;border-radius:3px"></div>
<svg style="left:571px;top:22px" width="23" height="23" viewBox="0 0 23 23">
<defs><linearGradient id="rg" x1="0" y1="0" x2="0" y2="1"><stop offset="0" stop-color="#f06262"/><stop offset="0.5" stop-color="#d42a2a"/><stop offset="1" stop-color="#c82020"/></linearGradient></defs>
<circle cx="11.5" cy="11.5" r="10.6" fill="#0c0c0c"/>
<circle cx="11.5" cy="11.5" r="9.8" fill="url(#rg)"/>
<rect x="4" y="9.7" width="15" height="3.8" rx="0.6" fill="#fff" stroke="#b83030" stroke-width="0.6"/>
</svg>
<span class="t" style="left:606px;top:25px;color:#fff;font-weight:bold">Eolite</span>
<span class="t" style="left:606px;top:37px;color:#e4e4e4">Ошибка #10: доступ запрещен</span>
<div id="task"></div>
<div class="tb" style="left:2px;width:42px;background:#006400"></div>
<span class="t" style="-webkit-text-stroke-width:0.1px;left:7px;top:580px;color:#fff;font-family:'Liberation Sans','DejaVu Sans',sans-serif;font-size:9.5px;line-height:10px;letter-spacing:0.3px;transform:scaleX(1.2);transform-origin:0 0">Меню</span>
<div class="tb" style="left:49px;width:15px;background:#0a78ff"></div>
<svg style="left:53.5px;top:579px" width="6" height="10" viewBox="0 0 6 10"><path d="M3 0.8v8.4M0.8 3L3 0.8L5.2 3M0.8 7L3 9.2L5.2 7" fill="none" stroke="#fff" stroke-width="1.1"/></svg>
<div class="tb" style="left:71px;width:73px;background:#7888b6;box-shadow:inset 1px 1px 0 #8e9ec8,inset -1px 0 0 #8e9ec8"></div>
<span class="t" style="-webkit-text-stroke-width:0.1px;left:75px;top:579px;color:#fff">EOLITE</span>
<div class="tb" style="left:728px;width:18px;background:#0a78ff"></div>
<span class="t" style="-webkit-text-stroke-width:0.1px;left:730px;top:580px;color:#fff;font-family:'Liberation Sans','DejaVu Sans',sans-serif;font-size:10px;line-height:10px;letter-spacing:0.5px">En</span>
<div style="left:748px;top:573px;width:8px;height:22px;background:#006400;border:1px solid #1c2c5c"></div>
<div class="tb" style="left:758px;width:37px;background:#0a78ff"></div>
<span class="t" style="-webkit-text-stroke-width:0.1px;left:762px;top:580px;color:#fff;font-family:'Liberation Sans','DejaVu Sans',sans-serif;font-size:10px;line-height:10px;letter-spacing:0.9px">17 26</span>
<!-- cursor -->
<svg style="left:128.4px;top:22.8px" width="14" height="20.5" viewBox="0 0 13 19"><path d="M1 1 L1 15 L4.2 12 L6.6 17.5 L9 16.4 L6.6 11 L11 11 Z" fill="#fff" stroke="#000" stroke-width="1.1" stroke-linejoin="miter"/></svg>
</body></html>
